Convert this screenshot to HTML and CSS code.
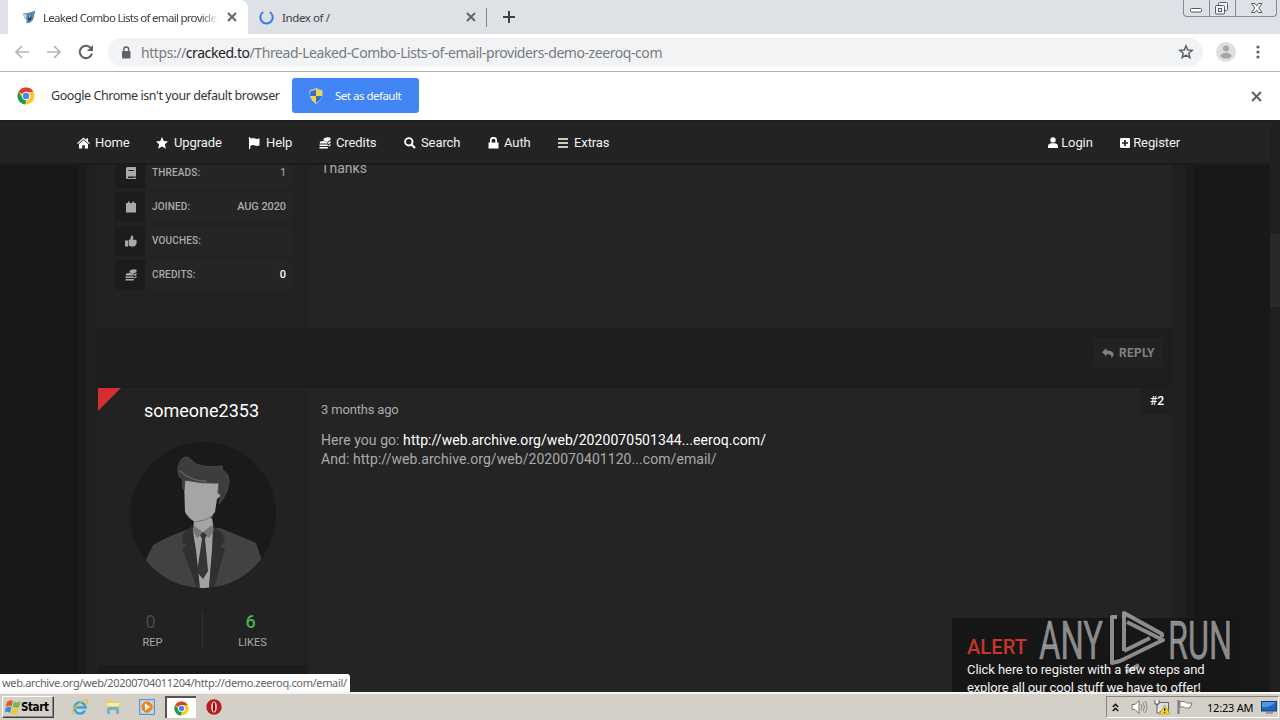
FILE: index.html
```html
<!DOCTYPE html>
<html lang="en">

<head>
    <meta charset="UTF-8">
    <meta name="viewport" content="width=device-width, initial-scale=1.0">
    <title>Leaked Combo Lists of email providers</title>
    <link rel="stylesheet" href="styles.css">
</head>

<body>
    <!-- shared icons -->
    <svg class="defs" width="0" height="0">
        <symbol id="chrome" viewBox="0 0 18 18">
            <circle cx="9" cy="9" r="8.5" fill="#fbc92c" />
            <path d="M9 9L1.6 4.8A8.5 8.5 0 0 1 16.4 4.8L9 5z" fill="#dd3b2d" />
            <path d="M1.6 4.8L5.5 11 9 13 8.2 17.5A8.5 8.5 0 0 1 1.6 4.8z" fill="#199b53" />
            <circle cx="9" cy="9" r="4.2" fill="#fff" />
            <circle cx="9" cy="9" r="3.2" fill="#4285f4" />
        </symbol>
        <symbol id="coins" viewBox="0 0 12 12">
            <path d="M4.5 1.8Q7.5-.6 11.5.8V3L9 4.5 4.5 3.5zM9 5.5L11.5 4V6L9.5 7.2zM9.5 8.2L11.5 7V8.4L9.5 9.8zM1 4.6Q4.5 3.4 8.5 4.6V6.6H.8zM.5 7.5H8.8V9H.5zM.5 9.9H8.8V11.6H.5z" />
        </symbol>
        <symbol id="close" viewBox="0 0 10 10">
            <path d="M1 1L9 9M9 1L1 9" fill="none" stroke="currentColor" stroke-width="1.9" />
        </symbol>
    </svg>

    <div class="window">
        <div class="tabs">
            <div class="tab active">
                <svg class="favicon" width="14" height="14" viewBox="0 0 14 14">
                    <path d="M1 3Q5 4 12 1L13.5 0 12 6Q12 11 7 13L4 13 5 10Q2 9 1 3z" fill="#5b89ad" />
                    <path d="M1 3L5 5 4 9Q2 8 1 3z" fill="#b5d2e6" />
                    <path d="M6 7L10 4 9 10 6 11z" fill="#1f4468" />
                    <path d="M7 8L9 5" stroke="#c9dfed" />
                </svg>
                <span class="tab-title long">Leaked Combo Lists of email provider</span>
                <svg class="tab-close" width="10" height="10"><use href="#close" /></svg>
            </div>
            <div class="tab second">
                <svg class="favicon" width="15" height="15" viewBox="0 0 15 15">
                    <path d="M4.2 2A6.2 6.2 0 1 0 10.8 2" fill="none" stroke="#3b78e7" stroke-width="2" />
                </svg>
                <span class="tab-title">Index of /</span>
                <svg class="tab-close" width="10" height="10"><use href="#close" /></svg>
            </div>
            <svg class="new-tab" width="12" height="12" viewBox="0 0 12 12">
                <path d="M6 0V12M0 6H12" stroke="#3c4043" stroke-width="2" />
            </svg>
            <div class="win-btns">
                <span class="wb"><svg width="25" height="16" viewBox="0 0 25 16"><rect x="6.5" y="8.5" width="11" height="3.5" rx="1" fill="#fff" stroke="#555b66" /></svg></span>
                <span class="wb"><svg width="25" height="16" viewBox="0 0 25 16"><g fill="#f3f4f7" stroke="#555b66"><rect x="8.500" y="2.500" width="9" height="8" rx="1" /><rect x="5.500" y="5.500" width="9" height="8.500" rx="1" /><rect x="8.500" y="8.500" width="3" height="3" /></g></svg></span>
                <span class="wb"><svg width="40" height="16" viewBox="0 0 40 16"><path d="M15.500 3.500H19L20.800 5.700 22.500 3.500H26L22.800 8 26 12.500H22.500L20.800 10.300 19 12.500H15.500L18.800 8z" fill="#fff" stroke="#555b66" /></svg></span>
            </div>
        </div>

        <div class="toolbar">
            <svg class="nav-icon" width="16" height="14" viewBox="0 0 16 14"><path d="M15 7H2M8 1L2 7 8 13" fill="none" stroke="#b3b5b8" stroke-width="1.7" /></svg>
            <svg class="nav-icon" width="16" height="14" viewBox="0 0 16 14"><path d="M1 7H14M8 1L14 7 8 13" fill="none" stroke="#b3b5b8" stroke-width="1.7" /></svg>
            <svg class="nav-icon" width="16" height="16" viewBox="0 0 16 16">
                <path d="M13.200 4.500A6.200 6.200 0 1 0 14 9.500" fill="none" stroke="#5f6368" stroke-width="2.100" />
                <path d="M15 1V7H9z" fill="#5f6368" />
            </svg>
            <div class="omnibox">
                <svg width="10" height="13" viewBox="0 0 10 13">
                    <rect x="1" y="5" width="8.500" height="7.500" rx="1" fill="#5f6368" />
                    <path d="M2.800 5V3.500A2.400 2.400 0 0 1 7.700 3.500V5" fill="none" stroke="#5f6368" stroke-width="1.400" />
                </svg>
                <span class="url">https://<b>cracked.to</b>/Thread-Leaked-Combo-Lists-of-email-providers-demo-zeeroq-com</span>
                <svg class="star" width="16" height="16" viewBox="0 0 16 16"><path d="M8 1.800L9.700 6 14.300 6.300 10.800 9.200 11.900 13.700 8 11.200 4.100 13.700 5.200 9.200 1.700 6.300 6.300 6z" fill="none" stroke="#5f6368" stroke-width="1.500" /></svg>
            </div>
            <svg class="profile" width="20" height="20" viewBox="0 0 20 20">
                <circle cx="10" cy="10" r="10" fill="#dedfe1" />
                <circle cx="10" cy="6.500" r="3" fill="#a5a7aa" />
                <ellipse cx="10" cy="13.700" rx="5.500" ry="2.900" fill="#a5a7aa" />
            </svg>
            <svg class="dots" width="4" height="14" viewBox="0 0 4 14"><g fill="#5f6368"><circle cx="2" cy="2" r="1.600" /><circle cx="2" cy="7" r="1.600" /><circle cx="2" cy="12" r="1.600" /></g></svg>
        </div>

        <div class="infobar">
            <svg width="18" height="18"><use href="#chrome" /></svg>
            <span class="info-text">Google Chrome isn't your default browser</span>
            <div class="default-btn">
                <svg width="14" height="16" viewBox="0 0 14 16">
                    <path d="M7 .5Q4 2.500 1 2.500 0 11 7 15.500 14 11 13 2.500 10 2.500 7 .5z" fill="#f8d33c" stroke="#c8cfd8" />
                    <path d="M7 1.500V8H1.200Q1 5 1.500 3.200 4.500 3.200 7 1.500zM7 8H12.800Q12 12 7 15z" fill="#3272c4" />
                </svg>
                <span>Set as default</span>
            </div>
            <svg class="info-close" width="11" height="11"><use href="#close" /></svg>
        </div>

        <div class="page">
            <div class="site">
                <ul class="menu">
                    <li class="home"><svg width="13" height="12" viewBox="0 0 13 12"><path d="M0 6.200L6.500.5 9.500 3V1.200H11V4.500L13 6.200 12.200 7 6.500 2.200.8 7zM2 7L6.500 3.300 11 7V11.500H7.800V8.200H5.200V11.500H2z" /></svg><span>Home</span></li>
                    <li class="upgrade"><svg width="12" height="12" viewBox="0 0 12 12"><path d="M6 0L7.800 4 12 4.400 8.900 7.300 9.800 11.700 6 9.500 2.200 11.700 3.100 7.300 0 4.400 4.200 4z" /></svg><span>Upgrade</span></li>
                    <li class="help"><svg width="12" height="12" viewBox="0 0 12 12"><path d="M.5.800A1.200 1.200 0 0 1 2.700 1.700Q5 .5 7 1.500T11.500 1.300V8.200Q9.500 9.500 7 8.500T2.300 9V12H1V2.300z" /></svg><span>Help</span></li>
                    <li class="credits"><svg width="12" height="12"><use href="#coins" /></svg><span>Credits</span></li>
                    <li class="search"><svg width="12" height="12" viewBox="0 0 12 12"><circle cx="4.800" cy="4.800" r="3.700" fill="none" stroke="#fff" stroke-width="1.900" /><path d="M7.500 7.500L11 11" stroke="#fff" stroke-width="2.200" /></svg><span>Search</span></li>
                    <li class="auth"><svg width="11" height="12" viewBox="0 0 11 12"><path d="M.5 5.500H10.500V11.500H.5z" /><path d="M2.800 6V3.500A2.600 2.600 0 0 1 8.200 3.500V6" fill="none" stroke="#fff" stroke-width="1.700" /></svg><span>Auth</span></li>
                    <li class="extras"><svg width="10" height="10" viewBox="0 0 10 10"><path d="M0 1H10M0 5H10M0 9H10" stroke="#fff" stroke-width="1.500" /></svg><span>Extras</span></li>
                    <li class="login"><svg width="10" height="11" viewBox="0 0 10 11"><circle cx="5" cy="2.900" r="2.700" /><path d="M0 11V8.800Q.5 6.500 3 6.200H7Q9.500 6.500 10 8.800V11z" /></svg><span>Login</span></li>
                    <li class="register"><svg width="10" height="10" viewBox="0 0 10 10"><rect width="10" height="10" rx="1.200" /><path d="M5 2V8M2 5H8" stroke="#232323" stroke-width="1.700" /></svg><span>Register</span></li>
                </ul>

                <div class="wrapper">
                    <div class="post first">
                        <div class="author">
                            <ul class="stats">
                                <li><i><svg width="10" height="12" viewBox="0 0 10 12"><path d="M1.500 0H10V9H9.300V11H10V12H1.500Q0 12 0 10.500V1.500Q0 0 1.500 0zM2.500 3V4H8V3zM2 9.500V11H8.500V9.500z" fill-rule="evenodd" /></svg></i><span>THREADS:<em class="plain">1</em></span></li>
                                <li><i><svg width="10" height="12" viewBox="0 0 10 12"><path d="M0 2H2V.5H3.500V2H6.500V.5H8V2H10V11.500H0z" /></svg></i><span>JOINED:<em>AUG 2020</em></span></li>
                                <li><i><svg width="12" height="12" viewBox="0 0 12 12"><path d="M0 5.500H3V11.500H0zM3.600 5.500Q6 4 6.300.5 8.500.2 8.300 3L7.800 4.800H11Q12 5.500 11.500 6.500 12.200 7.500 11.300 8.300 11.500 9.300 10.600 9.900 10.600 11.300 9 11.500H6L3.600 10.500z" /></svg></i><span>VOUCHES:</span></li>
                                <li><i><svg width="12" height="12"><use href="#coins" /></svg></i><span>CREDITS:<em class="white">0</em></span></li>
                            </ul>
                        </div>
                        <div class="content"><p class="thanks">Thanks</p></div>
                    </div>
                    <div class="actions">
                        <div class="reply"><svg width="12" height="10" viewBox="0 0 12 10"><path d="M0 4.200L4.500 0V2.500Q12 2.500 11.500 7 11 9 9.300 10 10.500 6 4.500 6V8.500z" /></svg><span>REPLY</span></div>
                    </div>
                    <div class="post second-post">
                        <div class="author">
                            <div class="name">someone2353</div>
                            <svg class="avatar" width="146" height="146" viewBox="0 0 146 146">
                                <clipPath id="round"><circle cx="73" cy="73" r="73" /></clipPath>
                                <g clip-path="url(#round)">
                                    <rect width="146" height="146" fill="#1a1a1a" />
                                    <path d="M10 130L23 103Q38 94 62 86L90 86Q110 94 126 101L136 130 110 146H30z" fill="#424242" />
                                    <path d="M64 78L63 89 68 146H79L84 88 82 76z" fill="#a2a2a2" />
                                    <path d="M62 84L53 92 52 101 57 103 52 107 67 146H70L66 108zM83 84L92 91 95 100 90 104 95 107 84 146H79L82 108z" fill="#303030" />
                                    <path d="M64 84L73 90 82 83 84 88 79 96 73 91 67 96 63 89z" fill="#777" />
                                    <path d="M70 93L73 90 77 93 75 97 78 129 73 137 67 130 72 97z" fill="#363636" />
                                    <path d="M54 38L55 70Q58 76 65 80L66 83 73 88 81 82 80 76 85 70 87 57Q91 55 91 50L90 40z" fill="#a5a5a5" />
                                    <path d="M65 80Q75 79 83 74" fill="none" stroke="#777" />
                                    <path d="M53 38L52 44 54 48 55 38Q72 42 89 41L88 51 91 53 89 62Q99 50 99 38 98 30 93 29L92 24Q77 26 66 22L58 15Q50 14 48 26 47 34 53 38z" fill="#3d3d3d" stroke="#484848" />
                                    <path d="M50 29Q62 40 77 39" fill="none" stroke="#666" stroke-width="1.200" />
                                </g>
                            </svg>
                            <div class="rating">
                                <div class="rate"><b class="zero">0</b><span>REP</span></div>
                                <div class="rate likes"><b>6</b><span>LIKES</span></div>
                            </div>
                            <div class="author-stats"></div>
                        </div>
                        <div class="content">
                            <div class="post-head"><span class="date">3 months ago</span><span class="post-num">#2</span></div>
                            <p class="line">Here you go: <a>http://web.archive.org/web/2020070501344...eeroq.com/</a></p>
                            <p class="line">And: http://web.archive.org/web/2020070401120...com/email/</p>
                        </div>
                    </div>
                </div>
            </div>
            <div class="scrollbar"><div class="thumb"></div></div>

            <div class="alert">
                <h3>ALERT</h3>
                <p class="a1">Click here to register with a few steps and</p>
                <p class="a2">explore all our cool stuff we have to offer!</p>
            </div>
            <svg class="watermark" width="196" height="64" viewBox="0 0 196 64">
                <g fill="#fff" fill-opacity=".5" stroke="#fff" stroke-opacity=".3" stroke-width=".6" font-family="Roboto" font-size="53">
                    <text x="3" y="50" textLength="64" lengthAdjust="spacingAndGlyphs">ANY</text>
                    <text x="132" y="50" textLength="64" lengthAdjust="spacingAndGlyphs">RUN</text>
                </g>
                <path d="M88 42V4L126 25V28M81 8L76 8V54L84 52 127 31 91 13M90 63L103 56M88 42L114 29" fill="none" stroke="#fff" stroke-opacity=".5" stroke-width="4" stroke-linejoin="round" />
            </svg>
            <div class="status">web.archive.org/web/20200704011204/http://demo.zeeroq.com/email/</div>
        </div>

        <div class="taskbar">
            <div class="start">
                <svg width="16" height="16" viewBox="0 0 16 16">
                    <path d="M2 3Q5 0 8 2L6.500 7.500Q4 6 .5 8z" fill="#e5572c" />
                    <path d="M9 2.500Q12 4.500 15.500 2L14 8Q11 9.500 7.500 8z" fill="#79b943" />
                    <path d="M.5 9Q4 7 6.300 8.500L5 14Q2.500 12 0 13.500z" fill="#3d8bd4" />
                    <path d="M7.300 9Q10 10.800 13.500 9L12 15Q9 16 6 14.500z" fill="#f5c431" />
                </svg>
                <span>Start</span>
            </div>
            <div class="task ie">
                <svg width="18" height="18" viewBox="0 0 18 18">
                    <path d="M14 12.500A5.600 5.600 0 1 1 14.600 9.500H4" fill="none" stroke="#39a4de" stroke-width="2.600" />
                    <path d="M2 16Q-1 14 6 7.500T16.500 2Q17.500 3 15 6" fill="none" stroke="#e9bf35" stroke-width="1.400" />
                </svg>
            </div>
            <div class="task">
                <svg width="16" height="16" viewBox="0 0 16 16">
                    <path d="M1 3V1H6L7 2.500H14V5H15V12H1z" fill="#edce67" />
                    <path d="M2 4H14V7H2z" fill="#f8edb0" />
                    <path d="M2 15V10Q2 8 4 8H12Q14 8 14 10V15H11V11H5V15z" fill="#68b5df" />
                </svg>
            </div>
            <div class="task">
                <svg width="16" height="16" viewBox="0 0 16 16">
                    <rect x=".5" y=".5" width="15" height="15" fill="#a9cde9" stroke="#5b97cc" />
                    <rect x="2.500" y="2.500" width="11" height="11" fill="#d7e9f6" />
                    <circle cx="8" cy="8" r="5.700" fill="#f08418" />
                    <path d="M6 4.500L11.500 8 6 11.500z" fill="#fff" />
                </svg>
            </div>
            <div class="task pressed"><svg width="15" height="15"><use href="#chrome" /></svg></div>
            <div class="task opera">
                <svg width="16" height="16" viewBox="0 0 16 16">
                    <circle cx="8" cy="8" r="7.700" fill="#b81b20" />
                    <ellipse cx="8" cy="8" rx="2.800" ry="5.500" fill="#f6e3e2" />
                    <ellipse cx="8" cy="8" rx="1.200" ry="4.800" fill="#851015" />
                </svg>
            </div>
            <div class="tray">
                <svg class="up" width="7" height="9" viewBox="0 0 7 9"><path d="M.8 4L3.500 1.300 6.200 4M.8 8L3.500 5.300 6.200 8" fill="none" stroke="#111" stroke-width="1.500" /></svg>
                <svg class="sound" width="17" height="16" viewBox="0 0 17 16"><path d="M1 5.500H4L8 1.500V14.500L4 10.500H1z" fill="#fff" stroke="#777" /><path d="M10 5Q12 8 10 11M12 3.500Q15 8 12 12.500M14 2Q18 8 14 14" fill="none" stroke="#888" /></svg>
                <svg class="net" width="16" height="16" viewBox="0 0 16 16"><rect x="3.500" y="3.500" width="11" height="9" fill="#d9dfe4" stroke="#666" /><path d="M1 1V5H5V1M3 5V14H6" fill="#fff" stroke="#555" /><path d="M10.500 6L16 15H5.500z" fill="#f7d51d" stroke="#a78d16" stroke-width=".6" /><path d="M10.700 9V12M10.700 13V14" stroke="#222" stroke-width="1.200" /></svg>
                <svg class="flag" width="16" height="16" viewBox="0 0 16 16"><path d="M1.500 15V1" stroke="#777" stroke-width="2" /><path d="M3 2.500H8L9.500 4H15L13 9H8.500L7.500 8H3z" fill="#fff" stroke="#777" /></svg>
                <span class="clock">12:23 AM</span>
                <svg class="screen" width="16" height="13" viewBox="0 0 16 13"><rect x=".5" y=".5" width="15" height="9.500" fill="#2264bc" stroke="#163f78" /><path d="M1 6Q9 7 15 1V1H1z" fill="#4f9ae3" /><path d="M5 12H12" stroke="#666" /></svg>
            </div>
        </div>
    </div>
</body>

</html>
```

FILE: styles.css
```css
* {
    margin: 0;
    padding: 0;
    box-sizing: border-box;
}

body {
    overflow: hidden;
    font-family: "Noto Sans", sans-serif;
}

li {
    list-style: none;
}

svg {
    display: block;
    flex-shrink: 0;
}

.defs {
    position: absolute;
}

.window {
    width: 1280px;
    height: 720px;
    display: flex;
    flex-direction: column;
    background-color: #fff;
    white-space: nowrap;
}

/* tabs */
.tabs {
    height: 34px;
    display: flex;
    background-color: #dee1e6;
    font-size: 11.5px;
    color: #3c4043;
}

.tab {
    height: 34px;
    display: flex;
    align-items: center;
}

.active {
    width: 240px;
    margin-left: 8px;
    padding: 0 11px 0 14px;
    background-color: #fff;
    border-radius: 0 8px 0 0;
}

.second {
    width: 239px;
    padding: 0 11px 0 11px;
    position: relative;
}

.second::after {
    content: "";
    position: absolute;
    right: 0;
    top: 8px;
    height: 19px;
    border-right: 1px solid #81858a;
}

.tab-title {
    margin-left: 8px;
    letter-spacing: -0.4px;
}

.long {
    margin-left: 7px;
    width: 175px;
    overflow: hidden;
    letter-spacing: -0.71px;
    -webkit-mask-image: linear-gradient(90deg, #000 90%, transparent);
}

.tab-close {
    margin-left: auto;
    color: #5f6368;
}

.new-tab {
    margin: 11px 0 0 16px;
}

.win-btns {
    height: 17px;
    margin: 0 3px 0 auto;
    display: flex;
    border: 1px solid #858b98;
    border-top: 0;
    border-radius: 0 0 4px 4px;
}

.wb + .wb {
    border-left: 1px solid #858b98;
}

/* toolbar */
.toolbar {
    height: 38px;
    display: flex;
    align-items: center;
    border-bottom: 1px solid #b1b4b5;
    padding: 0 0 1px 14px;
}

.nav-icon {
    margin-right: 16px;
}

.omnibox {
    width: 1095px;
    height: 28px;
    margin-left: -2px;
    padding: 0 9px 0 13px;
    display: flex;
    align-items: center;
    border-radius: 14px;
    background-color: #f1f3f4;
}

.url {
    margin-left: 10px;
    font-size: 14px;
    color: #777b80;
    letter-spacing: -0.43px;
}

.url b {
    font-weight: normal;
    color: #202124;
}

.star {
    margin-left: auto;
}

.profile {
    margin-left: 13px;
}

.dots {
    margin-left: 20px;
}

/* default browser bar */
.infobar {
    height: 48px;
    display: flex;
    align-items: center;
    padding-left: 17px;
    font-size: 12.5px;
    color: #333639;
}

.info-text {
    width: 241px;
    margin-left: 16px;
    padding-bottom: 1px;
    letter-spacing: -0.43px;
}

.default-btn {
    width: 127px;
    height: 35px;
    margin-bottom: 1px;
    padding-left: 17px;
    display: flex;
    align-items: center;
    border-radius: 3px;
    background-color: #4285f4;
    color: #fff;
    font-size: 11.5px;
}

.default-btn span {
    margin-left: 12px;
    padding-bottom: 1px;
    letter-spacing: -0.5px;
}

.info-close {
    margin: 0 18px 0 auto;
    color: #5f6368;
}

/* forum page */
.page {
    height: 572px;
    display: flex;
    position: relative;
    overflow: hidden;
    background-color: #181818;
    font-family: Roboto, sans-serif;
    color: #aaa;
}

.site {
    width: 1270px;
}

.menu {
    height: 45px;
    display: flex;
    align-items: center;
    padding: 0 90px 0 77px;
    background-color: #232323;
    border-top: 2px solid #1d1d1d;
    border-bottom: 2px solid #1b1b1b;
    font-size: 13px;
    letter-spacing: -0.1px;
    color: #f2f2f2;
    position: relative;
}

.menu li {
    height: 41px;
    display: flex;
    align-items: center;
    fill: #fff;
}

.menu span {
    margin-left: 5px;
}

.home {
    width: 79px;
}

.upgrade {
    width: 92px;
}

.upgrade span {
    margin-left: 6px;
}

.menu .help span {
    margin-left: 6px;
}

.help {
    width: 71px;
}

.credits {
    width: 85px;
}

.search {
    width: 84px;
}

.auth {
    width: 70px;
}

.menu .extras span {
    margin-left: 6px;
}

.login {
    width: 72px;
    margin-left: auto;
}

.menu .login span,
.menu .register span {
    margin-left: 3px;
}

.wrapper {
    width: 1116px;
    height: 527px;
    margin-left: 78px;
    padding: 0 14px 0 12px;
    background-color: #202020;
    border: solid #1c1c1c;
    border-width: 0 8px;
}

.post {
    display: flex;
    background-color: #242424;
}

.first {
    height: 163px;
}

.author {
    width: 210px;
    background-color: #222;
    border-right: 1px solid #1f1f1f;
}

.stats {
    padding-left: 17px;
    margin-top: -7px;
}

.stats li {
    width: 176px;
    height: 30px;
    margin-bottom: 4px;
    display: flex;
    font-size: 10px;
    font-weight: 500;
}

.stats i {
    width: 30px;
    margin-right: 1px;
    padding-left: 2px;
    display: flex;
    align-items: center;
    justify-content: center;
    background-color: #1c1c1c;
    fill: #aaa;
}

.stats span {
    flex: 1;
    display: flex;
    justify-content: space-between;
    padding: 0 5px 0 6px;
    line-height: 29px;
    background-color: #252525;
    letter-spacing: 0.15px;
}

.stats em {
    font-style: normal;
    font-size: 11px;
    letter-spacing: -0.1px;
}

.stats .plain {
    font-weight: normal;
}

.stats .white {
    color: #fff;
}

.content {
    flex: 1;
    padding-left: 13px;
}

.thanks {
    margin-top: -5px;
    font-size: 14px;
    letter-spacing: 0.05px;
}

.actions {
    height: 60px;
    padding: 10px 9px 0 0;
    background-color: #1e1e1e;
    border-bottom: 2px solid #1c1c1c;
}

.reply {
    width: 70px;
    height: 29px;
    margin-left: auto;
    padding-left: 9px;
    display: flex;
    align-items: center;
    gap: 5px;
    background-color: #222;
    fill: #818181;
    color: #818181;
    font-size: 12px;
    font-weight: bold;
    letter-spacing: 0.25px;
}

.second-post {
    height: 304px;
}

.second-post .author {
    position: relative;
}

.second-post .author::before {
    content: "";
    position: absolute;
    left: 0;
    top: 0;
    border-top: 23px solid #d32f2f;
    border-right: 23px solid transparent;
}

.name {
    height: 54px;
    padding-top: 12px;
    text-align: center;
    font-size: 18px;
    color: #fff;
    padding-right: 2px;
}

.avatar {
    margin-left: 32px;
}

.rating {
    height: 77px;
    padding-top: 24px;
    display: flex;
}

.rate {
    width: 105px;
    height: 39px;
    padding-left: 5px;
    text-align: center;
    border-right: 1px solid #303030;
}

.rate b {
    display: block;
    font-size: 18px;
    line-height: 19px;
    font-weight: 500;
    color: #4caf50;
    padding-right: 4px;
}

.rate .zero {
    color: #484848;
    font-weight: 400;
}

.rate span {
    font-size: 11px;
}

.likes {
    width: 99px;
    padding-left: 0;
    border: 0;
}

.author-stats {
    height: 27px;
    background-color: #1c1c1c;
}

.post-head {
    height: 43px;
    display: flex;
    justify-content: space-between;
}

.date {
    padding-top: 14px;
    font-size: 13px;
    letter-spacing: -0.17px;
}

.post-num {
    width: 32px;
    height: 26px;
    padding-left: 10px;
    line-height: 26px;
    font-size: 12px;
    font-weight: 500;
    color: #fff;
    background-color: #202020;
}

.line {
    font-size: 14px;
    line-height: 19px;
    letter-spacing: 0.06px;
}

.line a {
    color: #fff;
}

.scrollbar {
    width: 10px;
    padding-top: 114px;
    background-color: #202020;
}

.thumb {
    height: 73px;
    background-color: #292929;
}

.alert {
    position: absolute;
    left: 952px;
    top: 498px;
    width: 286px;
    height: 80px;
    padding: 17px 0 0 15px;
    background-color: #161616;
    color: #f1f1f1;
    font-size: 13px;
    line-height: 18px;
    letter-spacing: -0.07px;
}

.alert h3 {
    height: 26px;
    font-size: 20px;
    line-height: 24px;
    font-weight: 500;
    letter-spacing: 0.1px;
    color: #c9342d;
}

.a2 {
    letter-spacing: -0.12px;
}

.watermark {
    position: absolute;
    left: 1036px;
    top: 489px;
}

.status {
    position: absolute;
    left: 0;
    bottom: 0;
    width: 350px;
    height: 18px;
    padding-left: 2px;
    line-height: 18px;
    border-radius: 0 3px 0 0;
    background-color: #fff;
    color: #5f6368;
    font-family: "Noto Sans", sans-serif;
    font-size: 11px;
    letter-spacing: -0.35px;
}

/* windows taskbar */
.taskbar {
    height: 28px;
    display: flex;
    align-items: center;
    background-color: #d4d0c8;
    border-top: 2px solid #f5f4f1;
}

.start {
    width: 52px;
    height: 22px;
    margin: 0 15px 0 2px;
    padding-left: 2px;
    display: flex;
    align-items: center;
    border: 1px solid #fff;
    border-right-color: #404040;
    border-bottom-color: #404040;
    box-shadow: inset -1px -1px #8b8881;
    font-size: 11.5px;
    font-weight: bold;
    color: #000;
}

.start span {
    font-family: "DejaVu Sans Condensed", "DejaVu Sans", sans-serif;
    letter-spacing: -0.4px;
}

.task {
    width: 31px;
    height: 22px;
    margin-right: 3px;
    display: flex;
    align-items: center;
    justify-content: center;
}

.ie {
    width: 22px;
    margin-right: 6px;
}

.pressed {
    margin-right: 0;
    background-color: #fff;
    border: solid #55534e;
    border-width: 2px 0 0 2px;
}

.opera {
    margin-left: 2px;
}

.tray {
    width: 173px;
    height: 22px;
    margin: 0 1px 0 auto;
    display: flex;
    align-items: center;
    border: 1px solid #fff;
    border-top-color: #87847d;
    border-left-color: #87847d;
}

.up {
    margin: 0 12px 0 5px;
}

.sound {
    margin-right: 6px;
}

.net {
    margin-right: 7px;
}

.clock {
    width: 54px;
    margin-left: 14px;
    font-size: 11px;
    letter-spacing: -0.2px;
    color: #000;
}
```
